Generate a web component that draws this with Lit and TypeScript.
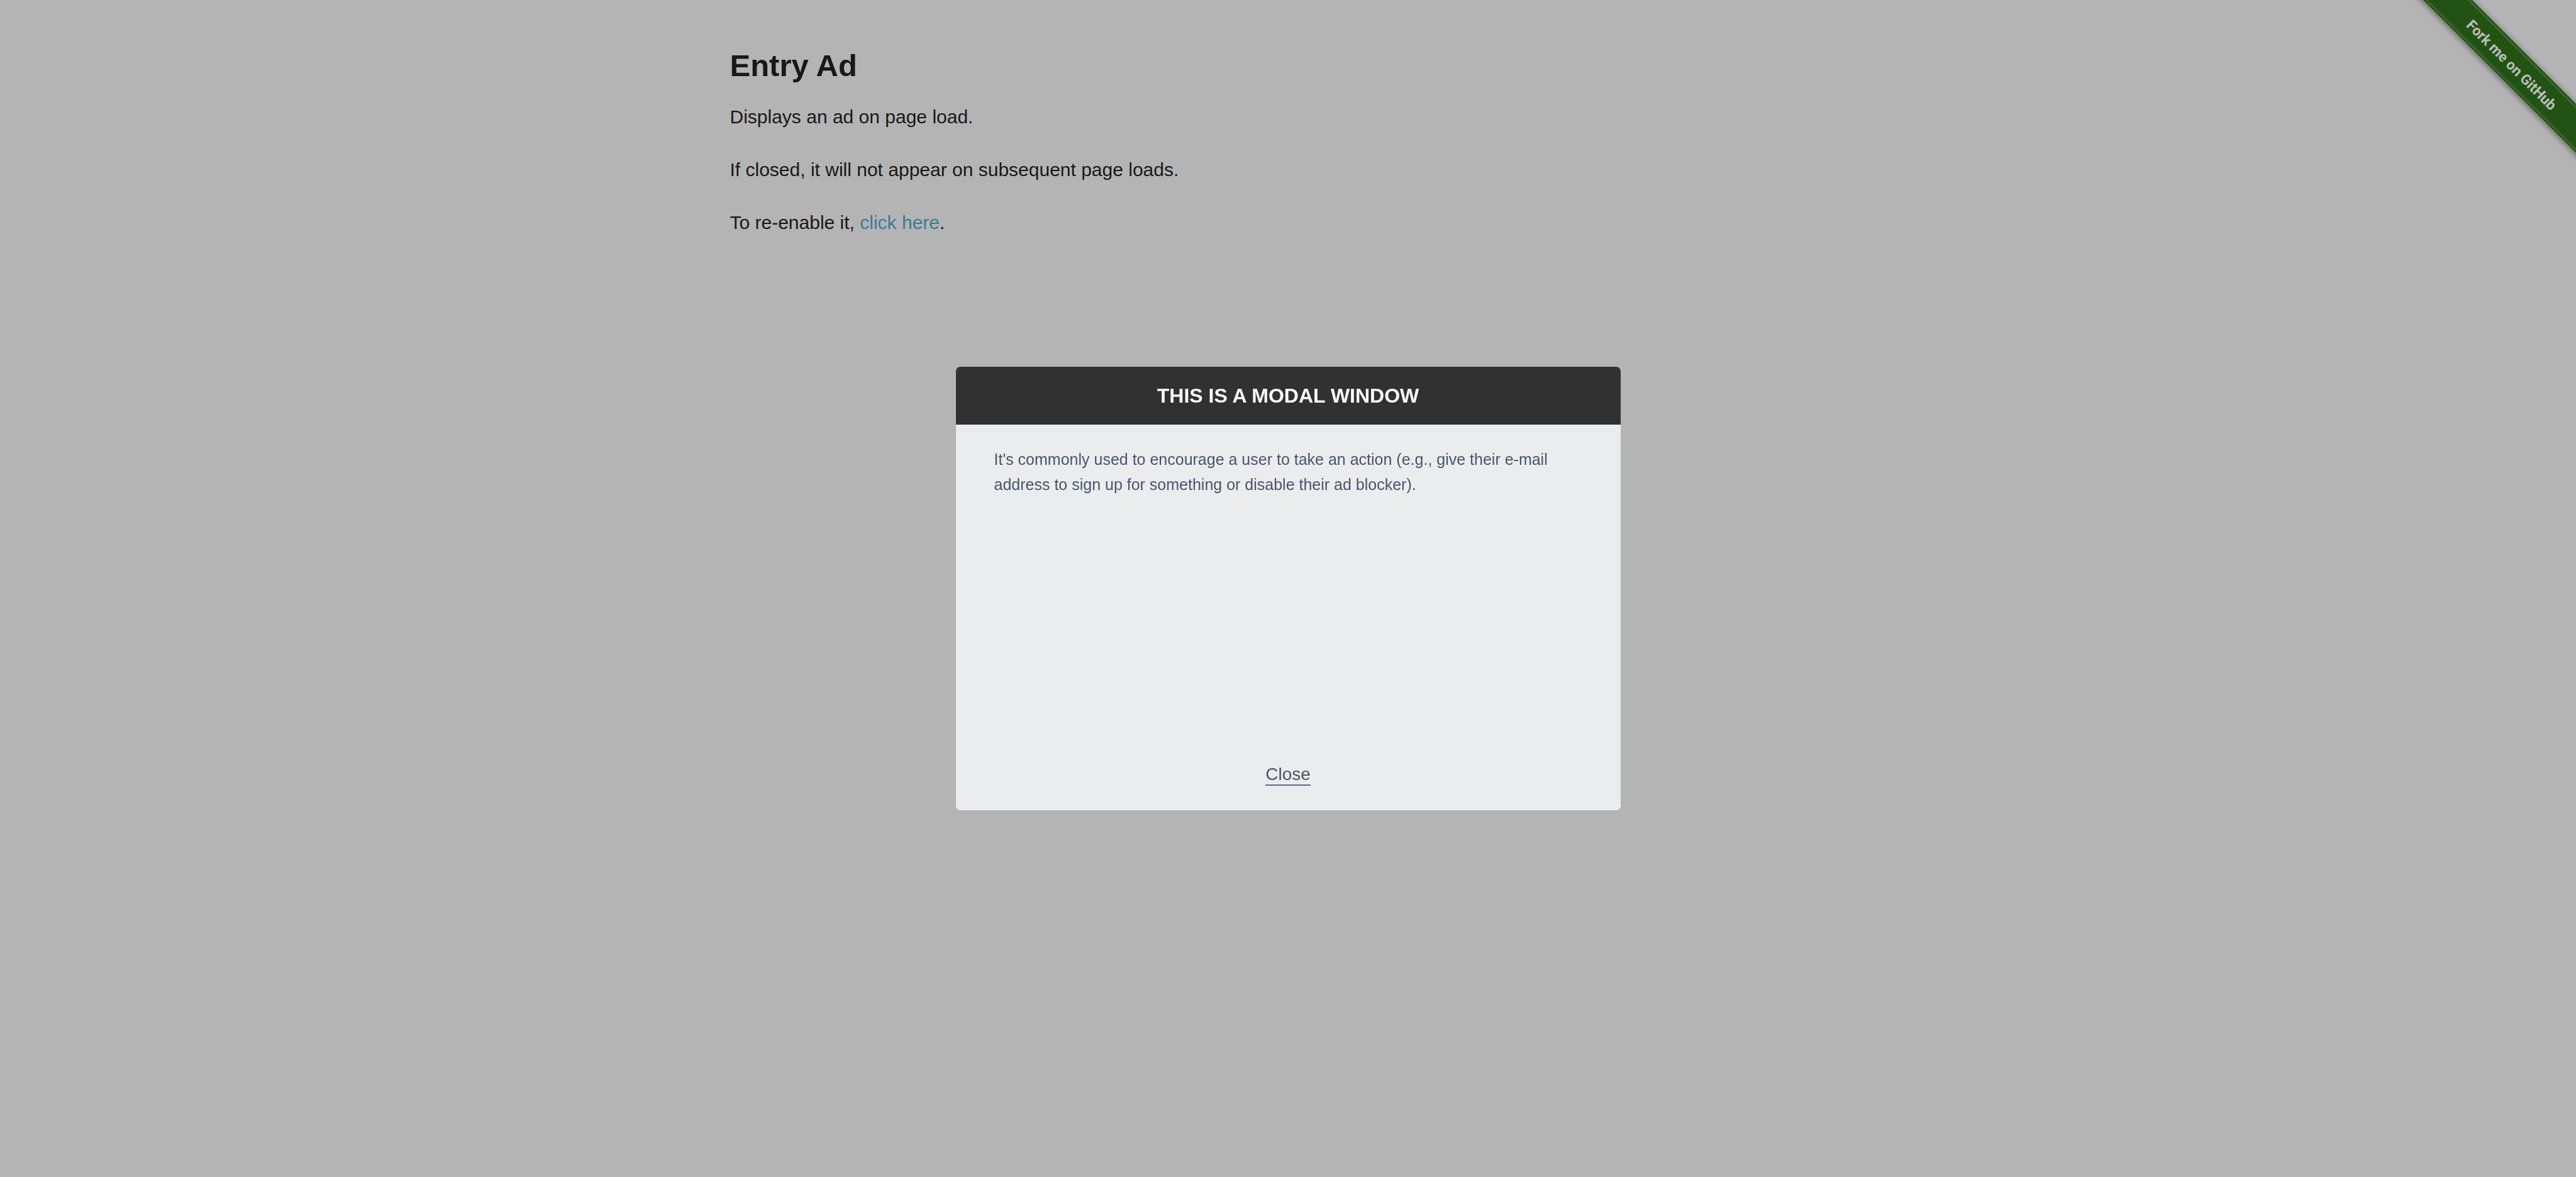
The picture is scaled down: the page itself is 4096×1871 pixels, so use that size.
import { LitElement, html, css } from "lit";
import { customElement, state } from "lit/decorators.js";

@customElement("github-ribbon")
class GithubRibbon extends LitElement {
  static styles = css`
    :host {
      display: block;
      width: 272px;
    }
    .link,
    .art {
      display: block;
      width: 100%;
    }
    .label {
      font-family: "Roboto", sans-serif;
      font-size: 25px;
      font-weight: 700;
      fill: #bcbfbb;
    }
  `;

  render() {
    return html`
      <a class="link" href="https://github.com/tourdedave/the-internet" aria-label="Fork me on GitHub">
        <svg class="art" viewBox="0 0 298 298">
          <defs>
            <filter id="soft" x="-20%" y="-60%" width="140%" height="220%">
              <feGaussianBlur stdDeviation="6" />
            </filter>
          </defs>
          <g transform="translate(186 113) rotate(45)">
            <rect x="-260" y="-29" width="520" height="60" fill="#000" opacity="0.5" filter="url(#soft)" />
            <rect x="-260" y="-31" width="520" height="60" fill="#235215" />
            <path d="M-260 -27H260M-260 25H260" stroke="#4d7d43" stroke-width="2" stroke-dasharray="3 1" />
            <text class="label" x="0" y="9" text-anchor="middle">Fork me on GitHub</text>
          </g>
        </svg>
      </a>
    `;
  }
}

@customElement("entry-modal")
class EntryModal extends LitElement {
  static styles = css`
    :host {
      display: block;
      width: 1057px;
      max-width: 100%;
    }
    .modal {
      display: flex;
      flex-direction: column;
      min-height: 705px;
      border-radius: 7px;
      overflow: hidden;
      background: #ebeced;
      color: #46566b;
    }
    .title {
      margin: 0;
      padding: 26px 24px;
      background: #313131;
      color: #fafafa;
      font-size: 32px;
      line-height: 40px;
      font-weight: 700;
      text-align: center;
      text-transform: uppercase;
    }
    .body {
      flex: 1;
      padding: 35px 61px;
      font-size: 25px;
      line-height: 40px;
    }
    .text {
      margin: 0;
    }
    .footer {
      display: flex;
      justify-content: center;
      padding-bottom: 39px;
    }
    .close {
      padding: 0;
      border: 0;
      border-bottom: 2px solid #5b6a7e;
      background: none;
      color: inherit;
      font: inherit;
      font-size: 28px;
      line-height: 32px;
      cursor: pointer;
    }
  `;

  private close() {
    this.dispatchEvent(new CustomEvent("modal-close"));
  }

  render() {
    return html`
      <section class="modal" role="dialog" aria-labelledby="title">
        <h3 class="title" id="title">This is a modal window</h3>
        <div class="body">
          <p class="text">
            It's commonly used to encourage a user to take an action (e.g., give their e-mail
            address to sign up for something or disable their ad blocker).
          </p>
        </div>
        <div class="footer">
          <button class="close" type="button" @click=${this.close}>Close</button>
        </div>
      </section>
    `;
  }
}

@customElement("app-root")
class AppRoot extends LitElement {
  static styles = css`
    :host {
      display: block;
      min-height: 100vh;
      background: #b4b4b4;
      color: #181818;
      font-family: "Liberation Sans", Arial, sans-serif;
    }
    .content {
      box-sizing: border-box;
      max-width: 1829px;
      margin: 0 auto;
      padding: 69px 27px 0;
    }
    .heading {
      margin: 0 0 23px;
      font-size: 49px;
      line-height: 70px;
      font-weight: 700;
    }
    .line {
      margin: 0 0 36px;
      font-size: 30px;
      line-height: 48px;
    }
    .link {
      color: #3a7b98;
      text-decoration: none;
    }
    .ribbon {
      position: absolute;
      top: 0;
      right: 0;
    }
    .overlay {
      position: fixed;
      inset: 0;
      display: flex;
      align-items: center;
      justify-content: center;
    }
  `;

  @state() private open = true;

  private reopen(event: Event) {
    event.preventDefault();
    this.open = true;
  }

  render() {
    return html`
      <github-ribbon class="ribbon"></github-ribbon>
      <main class="content">
        <h3 class="heading">Entry Ad</h3>
        <p class="line">Displays an ad on page load.</p>
        <p class="line">If closed, it will not appear on subsequent page loads.</p>
        <p class="line">To re-enable it, <a class="link" href="#" @click=${this.reopen}>click here</a>.</p>
      </main>
      ${this.open
        ? html`<div class="overlay">
            <entry-modal @modal-close=${() => (this.open = false)}></entry-modal>
          </div>`
        : null}
    `;
  }
}
